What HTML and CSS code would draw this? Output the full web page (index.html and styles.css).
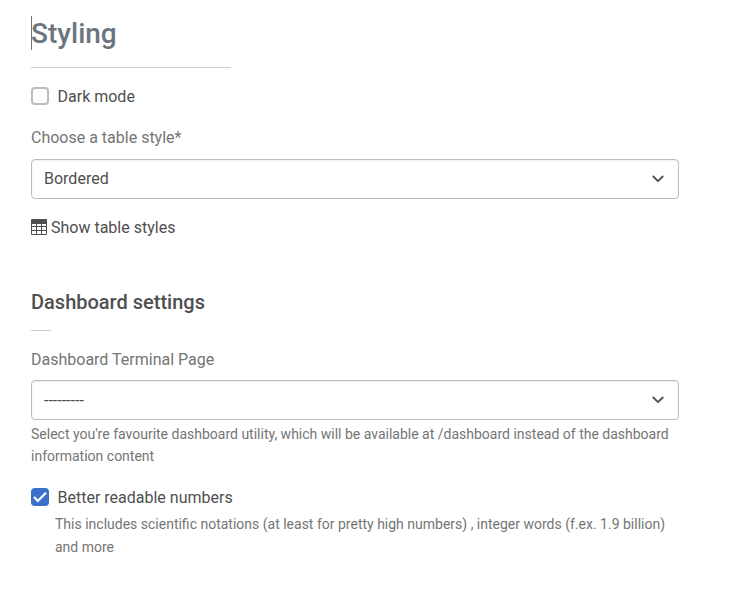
FILE: index.html
```html
<!DOCTYPE html>
<html lang="en">
<head>
<meta charset="utf-8">
<title>Settings</title>
<link rel="stylesheet" href="styles.css">
</head>
<body>
<form class="settings">
  <h1 class="title">Styling</h1>
  <hr class="rule rule-long">
  <label class="check"><span class="box"></span><span class="caption">Dark mode</span></label>
  <div class="label label-style">Choose a table style*</div>
  <div class="select select-style"><span>Bordered</span><svg class="chevron" viewBox="0 0 16 12"><path d="m3.3 3.5 4.7 4.7 4.7-4.7"/></svg></div>
  <div class="link"><svg class="table-icon" viewBox="0 0 16 16"><path fill-rule="evenodd" d="M1 0h14a1 1 0 0 1 1 1v14a1 1 0 0 1-1 1H1a1 1 0 0 1-1-1V1a1 1 0 0 1 1-1zM1 5v2h4V5zM6 5v2h4V5zM11 5v2h4V5zM1 8v3h4V8zM6 8v3h4V8zM11 8v3h4V8zM1 12v3h4v-3zM6 12v3h4v-3zM11 12v3h4v-3z"/></svg><span class="caption">Show table styles</span></div>
  <h2 class="subtitle">Dashboard settings</h2>
  <hr class="rule rule-short">
  <div class="label label-page">Dashboard Terminal Page</div>
  <div class="select select-page"><span class="caption">---------</span><svg class="chevron" viewBox="0 0 16 12"><path d="m3.3 3.5 4.7 4.7 4.7-4.7"/></svg></div>
  <p class="help">Select you're favourite dashboard utility, which will be available at /dashboard instead of the dashboard<br>information content</p>
  <label class="check check-numbers"><span class="box checked"><svg viewBox="0 0 18 18"><path d="m3 9 3.8 4L15 4.8"/></svg></span><span class="caption">Better readable numbers</span></label>
  <p class="help help-indent">This includes scientific notations (at least for pretty high numbers) , integer words (f.ex. 1.9 billion)<br>and more</p>
</form>
</body>
</html>
```
FILE: styles.css
```css
* { box-sizing: border-box; }
body { margin: 0; background: #fff; color: #4f4f4f; font: 16px/24px Roboto, sans-serif; }
.settings { width: 648px; margin-left: 31px; padding-top: 16px; }
.title { margin: 0; width: 200px; height: 34px; border-left: 1px solid #6c757d; color: #6c757d; font-size: 28px; line-height: 36px; font-weight: 500; text-indent: -1px; }
.rule { margin: 0; border: 0; height: 1px; background: #ccc; }
.rule-long { width: 200px; margin-top: 17px; }
.rule-short { width: 20px; margin-top: 16px; }
.check { display: flex; align-items: center; gap: 8.5px; height: 24px; margin-top: 16px; }
.caption { padding-top: 2px; }
.box { width: 18px; height: 18px; border: 2px solid #bdbdbd; border-radius: 4px; }
.checked { border: 0; background: #3b71ca; }
.checked svg { display: block; fill: none; stroke: #fff; stroke-width: 2.2; }
.label { color: #757575; }
.label-style { margin-top: 18px; }
.label-page { margin-top: 17px; }
.select { display: flex; align-items: center; justify-content: space-between; height: 40px; padding: 0 12px; border: 1px solid #bdbdbd; border-radius: 4px; box-shadow: inset 0 1px 2px rgba(0,0,0,.08); }
.select-style { margin-top: 9px; }
.select-page { margin-top: 8px; }
.chevron { width: 16px; height: 12px; fill: none; stroke: #4f4f4f; stroke-width: 1.8; stroke-linecap: round; stroke-linejoin: round; }
.link { display: flex; align-items: center; gap: 4px; height: 24px; margin-top: 16px; }
.table-icon { width: 16px; height: 16px; fill: #4f4f4f; }
.subtitle { margin: 51px 0 0; font-size: 20px; line-height: 24px; font-weight: 500; }
.help { margin: 3px 0 0; color: #757575; font-size: 14px; line-height: 22.4px; white-space: nowrap; }
.check-numbers { margin-top: 17px; }
.help-indent { margin-left: 24px; margin-top: 4.4px; }
```
